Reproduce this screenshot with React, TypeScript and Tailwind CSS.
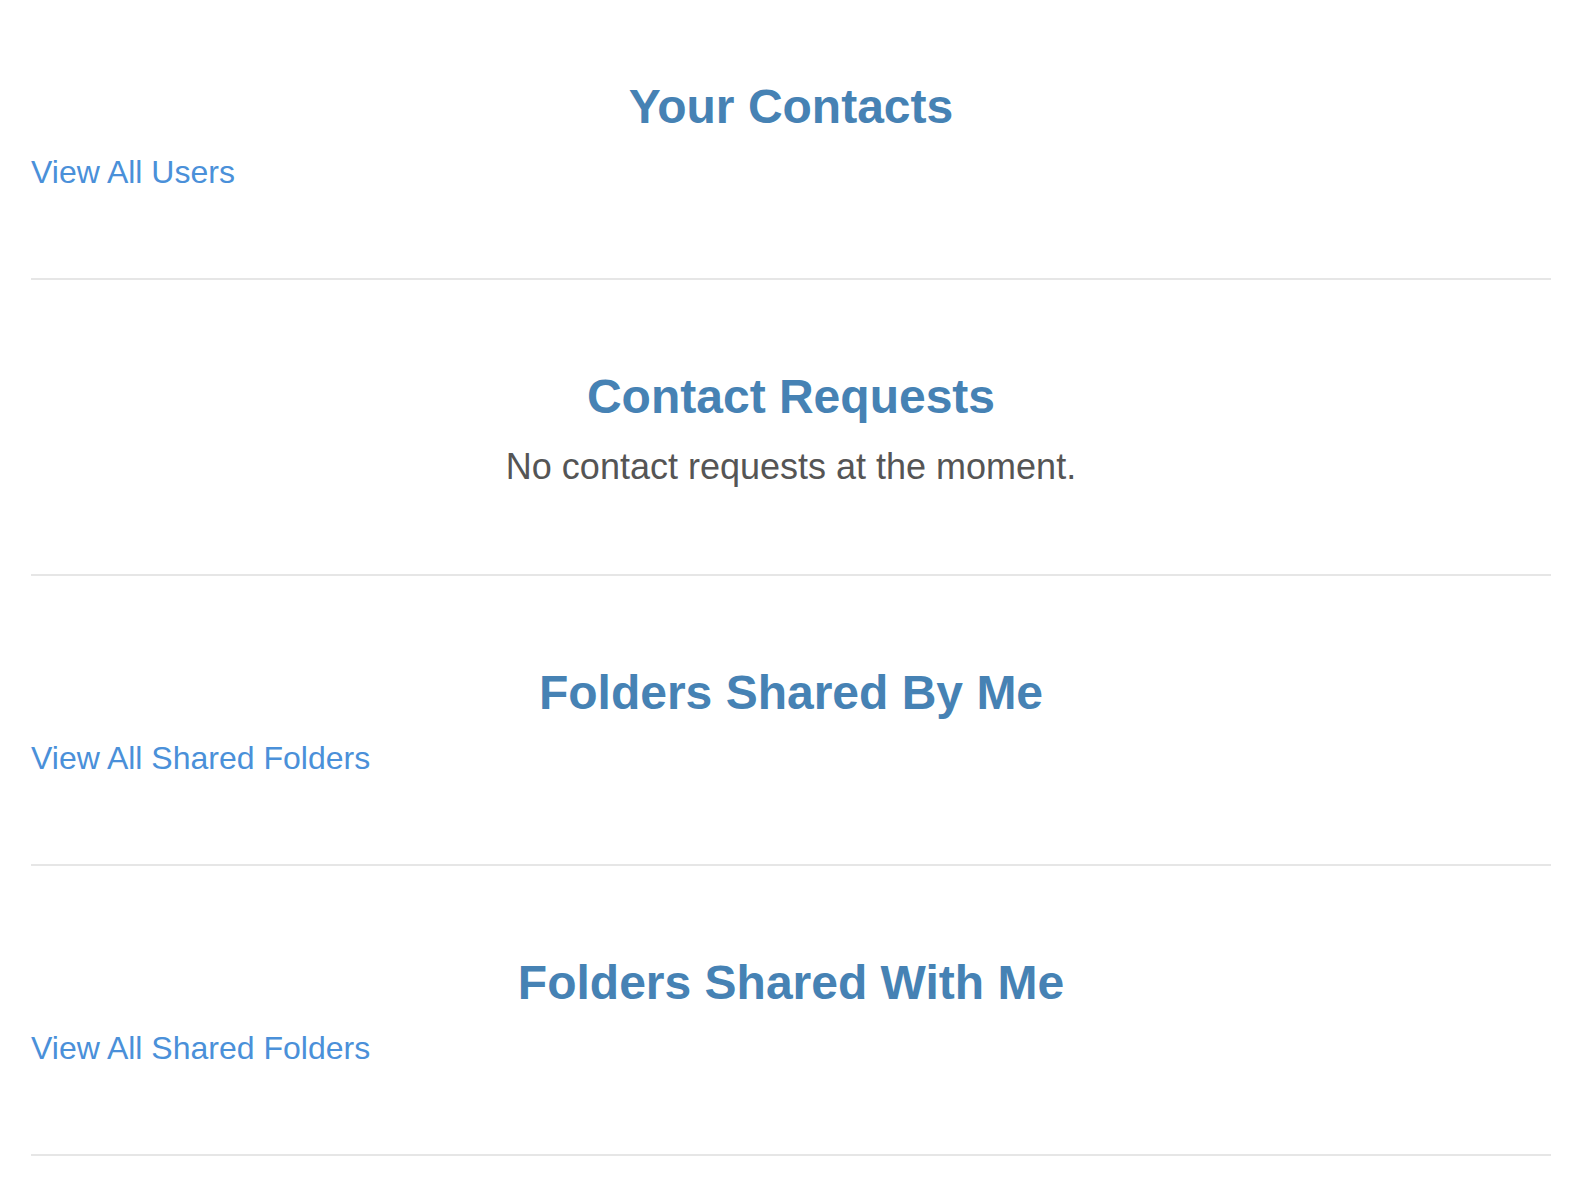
import React from "react";

type Section = {
  title: string;
  link?: string;
  message?: string;
};

const sections: Section[] = [
  { title: "Your Contacts", link: "View All Users" },
  { title: "Contact Requests", message: "No contact requests at the moment." },
  { title: "Folders Shared By Me", link: "View All Shared Folders" },
  { title: "Folders Shared With Me", link: "View All Shared Folders" },
];

export default function App() {
  return (
    <div className="min-h-[1192px] bg-white font-['Liberation_Sans',Arial,sans-serif]">
      <div className="ml-[31px] w-[1520px]">
        {sections.map((section, i) => (
          <section
            key={section.title + i}
            className={`border-b-2 border-[#e6e6e6] ${
              i === 0 ? "pt-[79px]" : "pt-[89px]"
            } ${section.message ? "pb-[87px]" : "pb-[88px]"}`}
          >
            <h2 className="text-center text-[48px] font-bold leading-[56px] text-[#4682b4]">
              {section.title}
            </h2>
            {section.link && (
              <a
                href="#"
                className="mt-[19px] block w-fit text-[32px] leading-[36px] text-[#4a90d9]"
              >
                {section.link}
              </a>
            )}
            {section.message && (
              <p className="mt-[21px] text-center text-[36px] leading-[41px] text-[#555555]">
                {section.message}
              </p>
            )}
          </section>
        ))}
      </div>
    </div>
  );
}
